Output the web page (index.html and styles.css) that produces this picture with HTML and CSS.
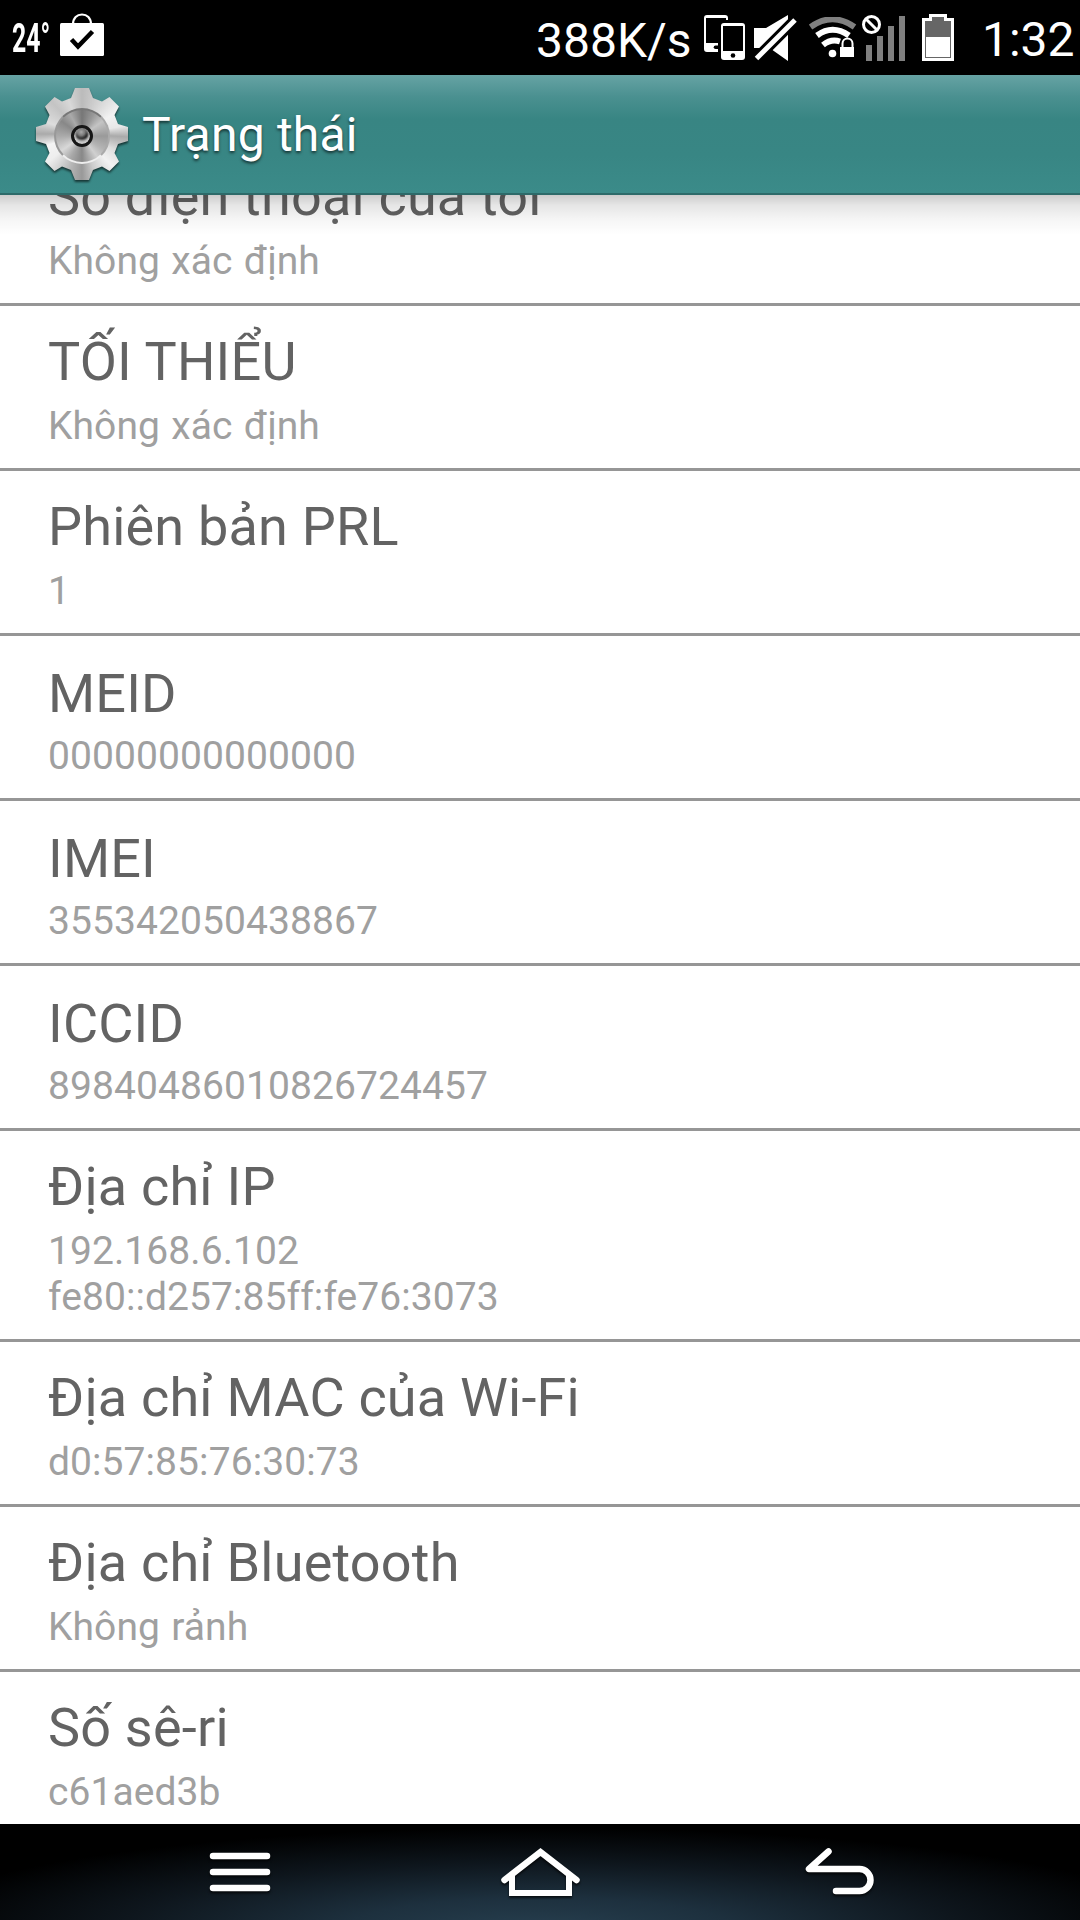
FILE: index.html
```
<!DOCTYPE HTML>
<html lang="vi">
<head>
  <meta charset="utf-8">
  <meta name="viewport" content="width=device-width, initial-scale=1.0">
  <title>Trạng thái</title>
  <link rel="stylesheet" href="styles.css">
</head>
<body>
  <div class="phone">
    <div class="status">
      <span class="temp"><b>24°</b></span>
      <svg class="icon-bag" width="44" height="44" viewBox="0 0 44 44">
        <path d="M13 11.500C13 5 17 1.500 22 1.500S31 5 31 11.500" fill="none" stroke="#fff" stroke-width="2.200"/>
        <rect y="10" width="44" height="33" rx="1.500" fill="#fff"/>
        <path d="M11.500 26.500L18 33.500L32.500 18.500" fill="none" stroke="#000" stroke-width="4.500"/>
      </svg>
      <span class="speed">388K/s</span>
      <svg class="icon-phones" width="41" height="46" viewBox="0 0 41 46">
        <path d="M3 0H21Q24 0 24 3V5H22V3H2V28H14V37H3Q0 37 0 34V3Q0 0 3 0Z" fill="#fff"/>
        <path d="M14 30.500h-2.500a1.800 1.800 0 0 0 0 3.600H14z" fill="#000"/>
        <rect x="17" y="8" width="24" height="37" rx="3" fill="#fff"/>
        <rect x="19" y="11" width="20" height="25" fill="#000"/>
        <circle cx="29" cy="40.500" r="2.300" fill="#000"/>
      </svg>
      <svg class="icon-mute" width="44" height="46" viewBox="0 0 44 46">
        <path d="M0 13H12L34 0V46L17 34L12 33H0Z" fill="#fff"/>
        <path d="M1 45L43 3" stroke="#000" stroke-width="11"/>
        <path d="M2.500 43.500L41 5" stroke="#fff" stroke-width="5"/>
      </svg>
      <svg class="icon-wifi" width="48" height="42" viewBox="0 0 48 42">
        <path d="M1.500 10Q23.500 -5.500 45.500 10" fill="none" stroke="#808080" stroke-width="6"/>
        <path d="M8 18.500Q23.500 7 40 18.500" fill="none" stroke="#fff" stroke-width="6"/>
        <path d="M14 28Q22 21.500 31 24.500" fill="none" stroke="#fff" stroke-width="6"/>
        <circle cx="23.500" cy="36.500" r="3.800" fill="#fff"/>
        <path d="M33.500 31V26.500a5 5 0 0 1 10 0V31" fill="#000" stroke="#fff" stroke-width="2"/>
        <rect x="31" y="30" width="14" height="10" fill="#fff"/>
      </svg>
      <svg class="icon-signal" width="44" height="46" viewBox="0 0 44 46">
        <path d="M4 30h6v16H4zM15 21h6v25h-6zM26 11h6v35h-6zM37 1h6v45h-6z" fill="#808080"/>
        <circle cx="9.500" cy="9.500" r="8" fill="#000" stroke="#fff" stroke-width="3"/>
        <path d="M4 4L15 15" stroke="#fff" stroke-width="3"/>
      </svg>
      <svg class="icon-battery" width="32" height="47" viewBox="0 0 32 47">
        <path d="M7 0H25V4H32V47H0V4H7Z" fill="#fff"/>
        <path d="M10 3H22V7H29V44H3V7H10Z" fill="#666"/>
        <rect x="4" y="23" width="24" height="20" fill="#fff"/>
      </svg>
      <span class="clock">1:32</span>
    </div>

    <div class="header">
      <div class="gear-shadow">
        <div class="gear">
          <div class="gear-disc">
            <div class="gear-hub"></div>
          </div>
        </div>
      </div>
      <h1 class="header-title">Trạng thái</h1>
    </div>

    <ul class="list">
      <li class="item">
        <div class="item-title">Số điện thoại của tôi</div>
        <div class="item-text">Không xác định</div>
      </li>
      <li class="item">
        <div class="item-title">TỐI THIỂU</div>
        <div class="item-text">Không xác định</div>
      </li>
      <li class="item">
        <div class="item-title">Phiên bản PRL</div>
        <div class="item-text">1</div>
      </li>
      <li class="item item-latin">
        <div class="item-title">MEID</div>
        <div class="item-text">00000000000000</div>
      </li>
      <li class="item item-latin">
        <div class="item-title">IMEI</div>
        <div class="item-text">355342050438867</div>
      </li>
      <li class="item item-latin">
        <div class="item-title">ICCID</div>
        <div class="item-text">89840486010826724457</div>
      </li>
      <li class="item">
        <div class="item-title">Địa chỉ IP</div>
        <div class="item-text">192.168.6.102<br>fe80::d257:85ff:fe76:3073</div>
      </li>
      <li class="item">
        <div class="item-title">Địa chỉ MAC của Wi-Fi</div>
        <div class="item-text">d0:57:85:76:30:73</div>
      </li>
      <li class="item">
        <div class="item-title">Địa chỉ Bluetooth</div>
        <div class="item-text">Không rảnh</div>
      </li>
      <li class="item">
        <div class="item-title">Số sê-ri</div>
        <div class="item-text">c61aed3b</div>
      </li>
    </ul>

    <div class="nav">
      <svg width="80" height="60" viewBox="0 0 80 60">
        <path d="M13 14H67M13 30H67M13 46H67" stroke="#fff" stroke-width="6.500" stroke-linecap="round"/>
      </svg>
      <svg width="80" height="60" viewBox="0 0 80 60">
        <path d="M4.500 38L40.500 10L76.500 38" fill="none" stroke="#fff" stroke-width="6.500" stroke-linecap="round"/>
        <path d="M12 33V51H69V33" fill="none" stroke="#fff" stroke-width="6"/>
      </svg>
      <svg width="80" height="60" viewBox="0 0 80 60">
        <path d="M28.500 9.500L9 27H59.500a11 11 0 0 1 0 22H36" fill="none" stroke="#fff" stroke-width="6.500" stroke-linecap="round" stroke-linejoin="round"/>
      </svg>
    </div>
  </div>
</body>
</html>
```
FILE: styles.css
```
html,
body,
ul,
li,
h1 {
  margin: 0;
  padding: 0;
}
body {
  background: #fff;
  font-family: Roboto, "Noto Sans", sans-serif;
}
svg {
  display: block;
  flex: none;
}
.phone {
  display: flex;
  flex-direction: column;
  width: 1080px;
  height: 1920px;
  overflow: hidden;
}

/* status bar */
.status {
  display: flex;
  align-items: flex-start;
  flex: none;
  height: 75px;
  background: #000;
  color: #fff;
  white-space: nowrap;
}
.temp {
  width: 38px;
  margin: 15px 10px 0 12px;
  font-size: 40px;
  line-height: 47px;
}
.temp b {
  display: block;
  transform: scaleX(0.62);
  transform-origin: 0 0;
}
.icon-bag {
  margin-top: 13px;
}
.speed {
  width: 168px;
  margin: 12px 0 0 432px;
  font-size: 48px;
  line-height: 58px;
}
.icon-phones {
  margin-top: 15px;
}
.icon-mute {
  margin: 15px 0 0 9px;
}
.icon-wifi {
  margin: 17px 0 0 11px;
}
.icon-signal {
  margin: 15px 0 0 5px;
}
.icon-battery {
  margin: 14px 0 0 16px;
}
.clock {
  margin: 11px 0 0 28px;
  font-size: 48px;
  line-height: 58px;
}

/* action bar */
.header {
  display: flex;
  align-items: flex-start;
  flex: none;
  box-sizing: border-box;
  height: 120px;
  border-bottom: 2px solid #2d6a69;
  background: linear-gradient(#66a3a4 0, #4a9090 22px, #388583 44px, #388684 80px, #3b8b89 118px);
}
.header-title {
  margin: 32px 0 0 14px;
  color: #fff;
  font-size: 48px;
  font-weight: normal;
  letter-spacing: 0.2px;
  line-height: 56px;
  text-shadow: 0 2px 3px rgba(0, 0, 0, 0.6);
}
.gear-shadow {
  margin: 13px 0 0 36px;
  filter: drop-shadow(0 2px 1px rgba(0, 0, 0, 0.6));
}
.gear {
  display: flex;
  align-items: center;
  justify-content: center;
  width: 92px;
  height: 92px;
  background: conic-gradient(#bbb, #d5d5d5 8%, #f2f2f2 16%, #e8e8e8 22%, #aaa 26%, #ddd 32%, #f2f2f2 38%, #ccc 45%, #999 50%, #bbb 56%, #eee 64%, #f4f4f4 70%, #aaa 75%, #ddd 80%, #c4c4c4 88%, #d8d8d8 94%, #bbb);
  clip-path: polygon(39px 0, 53px 0, 57px 10px, 66px 13.5px, 73.5px 9px, 83px 18.5px, 78.5px 27px, 82px 36px, 92px 39px, 92px 53px, 82px 56px, 78.5px 65px, 83px 73.5px, 73.5px 83px, 66px 78.5px, 57px 82px, 53px 92px, 39px 92px, 35px 82px, 26px 78.5px, 18.5px 83px, 9px 73.5px, 13.5px 65px, 10px 56px, 0 53px, 0 39px, 10px 36px, 13.5px 27px, 9px 18.5px, 18.5px 9px, 26px 13.5px, 35px 10px);
}
.gear-disc {
  display: flex;
  align-items: center;
  justify-content: center;
  box-sizing: border-box;
  width: 56px;
  height: 56px;
  margin-top: 4px;
  border: 2px solid;
  border-color: #777 #aaa #eee #999;
  border-radius: 50%;
  background: conic-gradient(#777, #999 8%, #c4c4c4 15%, #9a9a9a 25%, #b4b4b4 34%, #d0d0d0 40%, #888 50%, #aaa 58%, #d8d8d8 65%, #aaa 75%, #888 85%, #aaa 92%, #777);
}
.gear-hub {
  box-sizing: border-box;
  width: 22px;
  height: 22px;
  border: 3px solid #161616;
  border-radius: 50%;
  background: #161616 radial-gradient(circle at 45% 25%, #aaa 0, #777 25%, transparent 45%);
  box-shadow: inset 0 -5px 3px -1px #ccc, inset 3px 0 2px -1px #999, inset -3px 0 2px -1px #999;
}

/* preference list, scrolled part way under the action bar */
.list {
  position: relative;
  flex: 1;
  min-height: 0;
  overflow: hidden;
  list-style-type: none;
}
.list::before {
  content: "";
  position: absolute;
  top: 0;
  left: 0;
  width: 100%;
  height: 40px;
  background: linear-gradient(rgba(0, 0, 0, 0.2) 0, rgba(0, 0, 0, 0.1) 10px, rgba(0, 0, 0, 0.04) 24px, rgba(0, 0, 0, 0));
}
.item {
  padding: 19px 48px;
  border-bottom: 3px solid #969696;
}
.item:first-child {
  margin-top: -54px;
}
.item-title {
  margin-bottom: 5px;
  color: #636363;
  font-size: 54px;
  letter-spacing: 0.2px;
  line-height: 73px;
}
.item-latin .item-title {
  margin-bottom: 3px;
  padding-top: 2px;
}
.item-text {
  color: #a0a0a0;
  font-size: 39px;
  letter-spacing: 0.08px;
  line-height: 46px;
  word-spacing: 1.5px;
}

/* navigation keys */
.nav {
  display: flex;
  justify-content: center;
  gap: 220px;
  flex: none;
  box-sizing: border-box;
  height: 96px;
  padding-top: 18px;
  background: #000 radial-gradient(ellipse 640px 100px at 50% 108%, #263e4e 0, #1d303e 30%, #0e161d 65%, #000 100%);
}
.nav svg {
  filter: drop-shadow(0 2px 1px rgba(0, 0, 0, 0.7));
}
```
